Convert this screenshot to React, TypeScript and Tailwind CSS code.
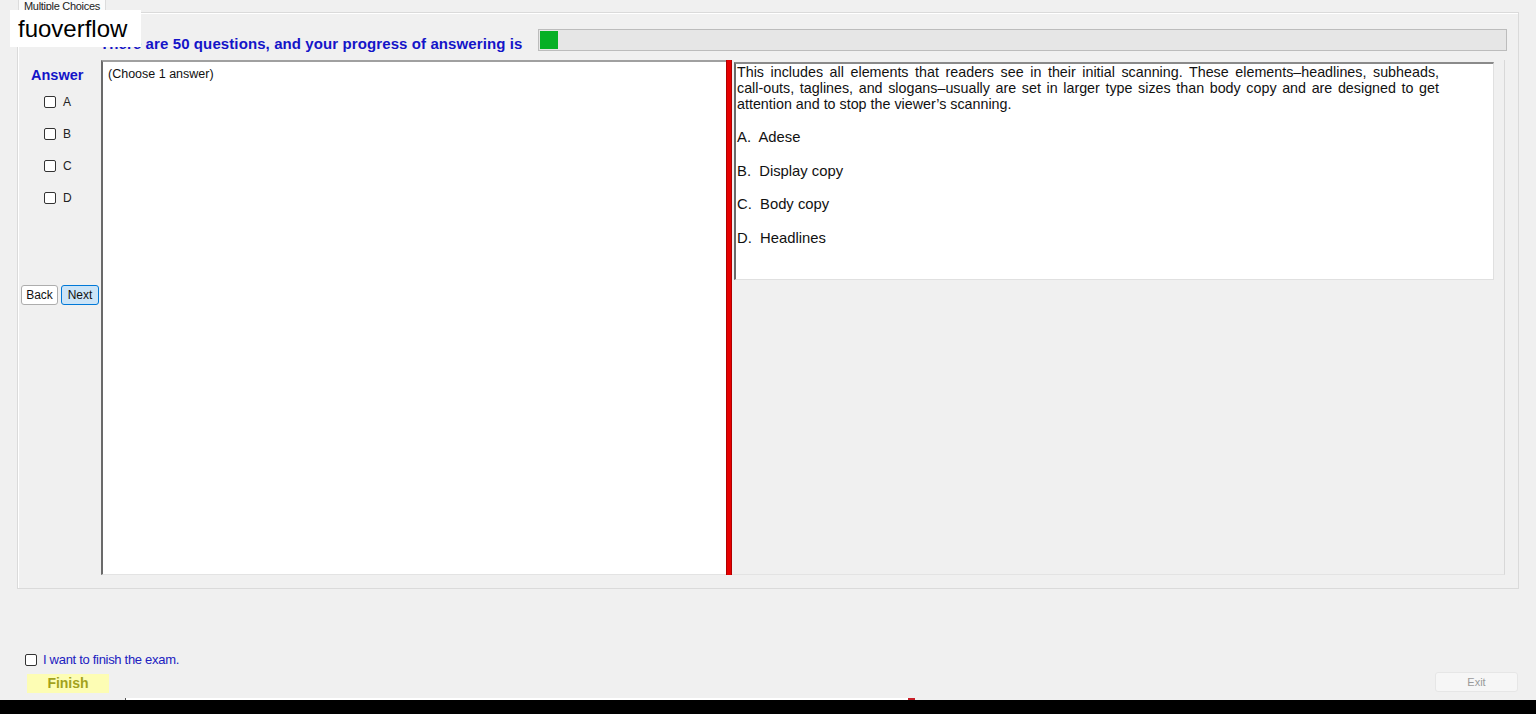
import React from "react";

const options = [
  { key: "A", text: "Adese" },
  { key: "B", text: "Display copy" },
  { key: "C", text: "Body copy" },
  { key: "D", text: "Headlines" },
];

const paragraph = [
  "This includes all elements that readers see in their initial scanning. These elements–headlines, subheads,",
  "call-outs, taglines, and slogans–usually are set in larger type sizes than body copy and are designed to get",
  "attention and to stop the viewer’s scanning.",
];

const Box = () => (
  <span className="block w-[12px] h-[12px] rounded-[2px] border border-[#333333] bg-white shrink-0" />
);

const App = () => {
  return (
    <div className="relative w-[1536px] h-[714px] overflow-hidden bg-[#f0f0f0] flex flex-col font-['Liberation_Sans',Arial,sans-serif] text-black">
      {/* tab header */}
      <div className="h-[12px] flex">
        <div className="ml-[18px] w-[88px] h-[13px] bg-[#fbfbfb] border-x border-[#dcdcdc]">
          <div className="text-[11px] leading-[12px] pl-[5px] tracking-[-0.3px] text-[#222]">Multiple Choices</div>
        </div>
      </div>

      {/* group box */}
      <div className="ml-[17px] w-[1502px] h-[577px] border border-[#dadada] shadow-[inset_1px_1px_0_#ffffff] pt-[16px] pl-[3px] flex flex-col">
        <div className="flex h-[22px]">
          <div className="w-[517px] pl-[79px] flex items-end">
            <span className="text-[15px] leading-[16px] font-bold tracking-[0.1px] text-[#1414c8] -mb-[1px]">
              There are 50 questions, and your progress of answering is
            </span>
          </div>
          <div className="w-[969px] h-[22px] bg-[#e6e6e6] border border-[#bcbcbc] p-[1px] flex">
            <div className="w-[18px] h-full bg-[#06b025]" />
          </div>
        </div>

        <div className="mt-[9px] flex h-[515px]">
          {/* answer column */}
          <div className="w-[80px] flex flex-col">
            <div className="mt-[7px] pl-[10px] text-[14.5px] leading-[17px] font-bold text-[#1414c8]">Answer</div>
            <div className="mt-[12px] pl-[23px] flex flex-col gap-[20px]">
              {options.map((o) => (
                <div key={o.key} className="flex items-center h-[12px] gap-[7px]">
                  <Box />
                  <span className="text-[12px] leading-[12px] text-[#222]">{o.key}</span>
                </div>
              ))}
            </div>
            <div className="mt-[81px] flex gap-[3px]">
              <button className="w-[37px] h-[20px] bg-white border border-[#adadad] rounded-[3px] text-[12px] leading-[18px] text-[#111]">
                Back
              </button>
              <button className="w-[38px] h-[20px] bg-[#cce4f7] border border-[#0078d7] rounded-[3px] text-[12px] leading-[18px] text-[#111]">
                Next
              </button>
            </div>
          </div>

          {/* question notes */}
          <div className="w-[625px] h-full bg-white border-l-2 border-t-2 border-l-[#6a6a6a] border-t-[#a0a0a0] border-b border-b-[#e3e3e3] pl-[5px] pt-[5px]">
            <div className="text-[12.5px] leading-[14px] text-[#111]">(Choose 1 answer)</div>
          </div>

          <div className="w-[6px] h-full bg-[#e60000] border-x border-[#b00000]" />

          {/* question text */}
          <div className="w-[773px] h-full border-r border-[#d8d8d8] border-b border-b-[#e3e3e3] pl-[2px] pt-[2px]">
            <div className="w-[760px] h-[218px] bg-white border-l-2 border-t-2 border-l-[#6a6a6a] border-t-[#8a8a8a] border-r border-b border-r-[#e0e0e0] border-b-[#e0e0e0] pl-[1px]">
              <div className="w-[702px] text-[14.3px] leading-[16px] text-[#111]">
                {paragraph.map((line, i) => (
                  <div
                    key={i}
                    className={i < paragraph.length - 1 ? "text-justify [text-align-last:justify]" : ""}
                  >
                    {line}
                  </div>
                ))}
              </div>
              <div className="mt-[1px]">
                {options.map((o) => (
                  <div key={o.key} className="mt-[17px] text-[14.8px] leading-[16.5px] text-[#111] whitespace-pre">
                    {o.key}.{"  "}{o.text}
                  </div>
                ))}
              </div>
            </div>
          </div>
        </div>
      </div>

      {/* finish controls */}
      <div className="mt-[64px] pl-[25px] flex items-center h-[14px] gap-[6px]">
        <Box />
        <span className="text-[13px] leading-[14px] text-[#2020c0] tracking-[-0.3px]">I want to finish the exam.</span>
      </div>
      <div className="mt-[6px] flex justify-between h-[20px] pl-[27px] pr-[18px]">
        <button className="mt-[1px] w-[82px] h-[19px] bg-[#fdfdb4] text-[14px] font-bold text-[#a2a21c] leading-[19px]">Finish</button>
        <button className="-mt-[1px] w-[83px] h-[20px] bg-[#f6f6f6] border border-[#e6e6e6] rounded-[3px] text-[11px] text-[#9a9a9a] leading-[18px]">
          Exit
        </button>
      </div>

      <div className="flex-1" />
      <div className="h-[2px] flex">
        <div className="ml-[125px] w-[1px] bg-[#555]" />
        <div className="w-[782px] bg-white" />
        <div className="w-[7px] bg-[#c81e28]" />
      </div>
      <div className="h-[14px] bg-black" />

      {/* watermark label */}
      <div className="absolute left-[10px] top-[10px] w-[131px] h-[37px] bg-white pl-[8px] text-[24px] leading-[37px] text-black">
        fuoverflow
      </div>
    </div>
  );
};

export default App;
